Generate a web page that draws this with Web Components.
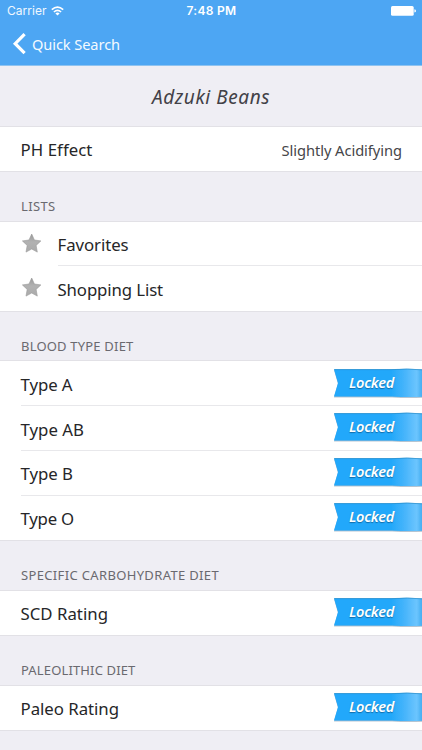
<!DOCTYPE html>
<html lang="en"><head><meta charset="utf-8"><title>Adzuki Beans</title>
<style>
html,body{margin:0;height:750px;overflow:hidden;background:#efeef4}
body{font-family:"Noto Sans","Open Sans",sans-serif;color:#262628}
</style></head><body>
<food-page></food-page>
<script>
const define=(name,html,setup)=>customElements.define(name,class extends HTMLElement{
  constructor(){super();this.attachShadow({mode:'open'}).innerHTML=html;}
  connectedCallback(){if(setup)setup(this,this.shadowRoot);}
});

/* One line of text, tracked so that its advance equals the w attribute. */
define('fit-text','<style>:host{display:block;white-space:nowrap}span{display:inline-block}</style><span></span>',(el,r)=>{
  const s=r.querySelector('span');s.textContent=el.getAttribute('text');
  const w=+el.getAttribute('w'),n=s.textContent.length;
  s.style.letterSpacing=((w-s.getBoundingClientRect().width)/n)+'px';
});

define('status-bar',`<style>
:host{display:grid;grid-template-columns:1fr auto 1fr;height:22px;align-items:center;color:#fff;font:12px/22px Inter,sans-serif;padding:0 6px 0 7px}
.l{display:flex;align-items:center;gap:4px;color:#f0f8ff}
.c{font-weight:600}
.r{justify-self:end;display:flex}
svg{display:block}
</style>
<div class="l"><fit-text text="Carrier" w="39.5"></fit-text><svg width="13" height="10" viewBox="0 0 13 10" fill="none" stroke="#fff" stroke-width="1.6"><path d="M.8 3.7Q6.5-1.6 12.2 3.7M2.9 6Q6.5 2.6 10.1 6"/><path d="M4.4 7.4Q6.5 5.7 8.6 7.4L6.5 9.6z" fill="#fff" stroke="none"/></svg></div>
<fit-text class="c" text="7:48 PM" w="50"></fit-text>
<div class="r"><svg width="25" height="11" viewBox="0 0 25 11" fill="#fff"><rect x="0" y="0" width="22.7" height="9.8" rx="1.5"/><path d="M23.4 3.2Q25 3.5 25 4.9T23.4 6.5z"/></svg></div>`);

define('nav-bar',`<style>
:host{display:block;height:66px;background:#4da6f3;border-bottom:1px solid #8fc3f0;box-sizing:border-box}
.n{display:flex;align-items:center;height:43px;padding-left:12px;gap:6px;color:#f4faff;font-size:14.6px;line-height:20px}
svg{display:block}
</style><status-bar></status-bar>
<div class="n"><svg width="14" height="22" viewBox="0 0 14 22" fill="none" stroke="#fff" stroke-width="3.2"><path d="M12.6 1.2L3.2 10.7l9.4 9.5"/></svg><fit-text text="Quick Search" w="88"></fit-text></div>`);

define('page-title',`<style>
:host{display:flex;height:60.7px;box-sizing:border-box;padding-top:2px;align-items:center;justify-content:center;font-size:19px;font-style:italic;line-height:24px;color:#424147}
</style><fit-text text="Adzuki Beans" w="118"></fit-text>`);

define('list-section',`<style>
:host{display:block}
.h{height:50.25px;box-sizing:border-box;padding:25px 0 0 21px;font-size:13px;line-height:20px;color:#6a696f}
.b{background:#fff;box-shadow:0 -1px #e2e1e6,0 1px #e2e1e6}
:host(:not([label])) .h{display:none}
</style><div class="h"></div><div class="b"><slot></slot></div>`,(el,r)=>{
  if(el.hasAttribute('label')){const t=document.createElement('fit-text');t.setAttribute('text',el.getAttribute('label'));t.setAttribute('w',el.getAttribute('w'));r.querySelector('.h').append(t);}
});

define('list-row',`<style>
:host{display:flex;height:44.75px;align-items:center;justify-content:space-between;padding-left:20.5px;box-sizing:border-box;font-size:16.8px;line-height:24px}
.m{flex:1;height:100%;display:flex;align-items:center;justify-content:space-between;box-sizing:border-box;border-bottom:1px solid transparent;padding-top:3px}
:host([line]) .m{border-bottom-color:#e8e8eb}
::slotted([slot=lead]){margin-right:16px}
</style><slot name="lead"></slot><div class="m"><span class="t"></span><slot></slot></div>`,(el,r)=>{
  const t=document.createElement('fit-text');t.setAttribute('text',el.getAttribute('text'));t.setAttribute('w',el.getAttribute('w'));r.querySelector('.t').append(t);
});

define('value-text',`<style>:host{display:block;font-size:14.7px;line-height:24px;color:#464649;padding:0 20px 1px 0}</style><fit-text text="Slightly Acidifying" w="120.5"></fit-text>`);

define('star-icon',`<style>:host{display:block;padding-bottom:2px}svg{display:block}</style>
<svg width="21" height="21" viewBox="0 0 21 21"><defs><linearGradient id="g" x2="0" y2="1"><stop stop-color="#999"/><stop offset=".45" stop-color="#b2b2b2"/><stop offset="1" stop-color="#aaa"/></linearGradient></defs><path d="M10.7 1L13.4 7l6.5.9-4.8 4.5 1.2 6.7-5.6-3.1L5 19.1l1.2-6.7L1.4 7.9 8 7z" fill="url(#g)" stroke="#999" stroke-width=".6" stroke-linejoin="round"/></svg>`);

define('locked-ribbon',`<style>
:host{display:grid;width:90px;height:32px;margin-top:-4.6px}
svg,fit-text{grid-area:1/1}
svg{display:block}
fit-text{padding:4.1px 0 0 17px;font:italic 600 14.6px/22px "Noto Sans","Open Sans",sans-serif;color:#fff;text-shadow:0 1px 1px #126ca8}
</style><svg width="90" height="32" viewBox="0 0 90 32"><defs><linearGradient id="r"><stop stop-color="#20a8fb"/><stop offset=".64" stop-color="#22a8fa"/><stop offset=".8" stop-color="#48b5fb"/><stop offset=".93" stop-color="#6cc5fe"/><stop offset=".97" stop-color="#50b5f5"/><stop offset="1" stop-color="#45aaf0"/></linearGradient><filter id="s" x="-10%" y="-20%" width="120%" height="150%"><feDropShadow dx="0" dy=".6" stdDeviation=".6" flood-color="#345f80" flood-opacity=".6"/></filter></defs>
<path d="M2 2.3H60Q76 1.2 91 2.5V29.7Q76 30.5 60 29.5H2L6 16z" fill="url(#r)" filter="url(#s)"/><path d="M2.3 2.6H60Q76 1.5 90 2.8" fill="none" stroke="#2484bf" stroke-width=".6"/></svg><fit-text text="Locked" w="45"></fit-text>`);

define('food-page',`<style>:host{display:block;width:422px}</style>
<nav-bar></nav-bar><page-title></page-title>
<list-section><list-row text="PH Effect" w="72"><value-text></value-text></list-row></list-section>
<list-section label="LISTS" w="34.5"><list-row line text="Favorites" w="71"><star-icon slot="lead"></star-icon></list-row><list-row text="Shopping List" w="105.5"><star-icon slot="lead"></star-icon></list-row></list-section>
<list-section label="BLOOD TYPE DIET" w="112.5"><list-row line text="Type A" w="52"><locked-ribbon></locked-ribbon></list-row><list-row line text="Type AB" w="63.5"><locked-ribbon></locked-ribbon></list-row><list-row line text="Type B" w="52.5"><locked-ribbon></locked-ribbon></list-row><list-row text="Type O" w="53.5"><locked-ribbon></locked-ribbon></list-row></list-section>
<list-section label="SPECIFIC CARBOHYDRATE DIET" w="198"><list-row text="SCD Rating" w="87.5"><locked-ribbon></locked-ribbon></list-row></list-section>
<list-section label="PALEOLITHIC DIET" w="114.5"><list-row text="Paleo Rating" w="98.5"><locked-ribbon></locked-ribbon></list-row></list-section>`);
</script></body></html>
